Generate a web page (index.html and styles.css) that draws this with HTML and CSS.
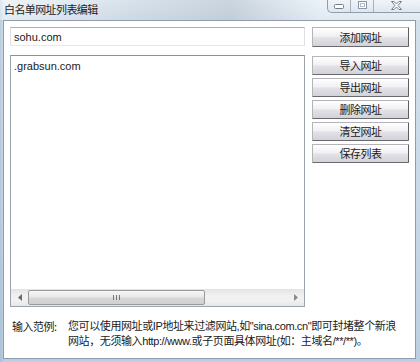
FILE: index.html
```html
<!DOCTYPE html>
<html lang="zh-CN">
<head>
<meta charset="utf-8">
<title>白名单网址列表编辑</title>
<link rel="stylesheet" href="styles.css">
</head>
<body>
<div class="window">
  <div class="titlebar">
    <span class="title">白名单网址列表编辑</span>
    <div class="caption">
      <span class="cap cap-min"><svg width="10" height="5" viewBox="0 0 10 5"><rect x="0.5" y="0.5" width="9" height="4" rx="1" fill="#fff" stroke="#6f7c8a"/></svg></span>
      <span class="cap cap-max"><svg width="9" height="8" viewBox="0 0 9 8"><rect x="0.5" y="0.5" width="8" height="7" fill="#fff" stroke="#8a96a3"/><rect x="2.5" y="2.5" width="4" height="3" fill="none" stroke="#b5bec8"/></svg></span>
      <span class="cap cap-close"><svg width="11" height="9" viewBox="0 0 11 9"><path d="M0.5 0.5 H3 L5.5 3 L8 0.5 H10.5 L7 4.5 L10.5 8.5 H8 L5.5 6 L3 8.5 H0.5 L4 4.5 Z" fill="#fff" stroke="#6f7c8a" stroke-linejoin="round"/></svg></span>
    </div>
  </div>
  <div class="client">
    <div class="main">
      <div class="left">
        <input class="url-input" type="text" value="sohu.com">
        <div class="list">
          <div class="items">
            <div class="item">.grabsun.com</div>
          </div>
          <div class="hscroll">
            <span class="sb-btn"><svg width="4" height="7" viewBox="0 0 4 7"><path d="M4 0 L0 3.5 L4 7 Z" fill="#6a6a6a"/></svg></span>
            <div class="track">
              <div class="thumb"><svg width="8" height="5" viewBox="0 0 8 5"><path d="M0.5 0 V5 M3.5 0 V5 M6.5 0 V5" stroke="#777" stroke-width="1"/></svg></div>
            </div>
            <span class="sb-btn"><svg width="4" height="7" viewBox="0 0 4 7"><path d="M0 0 L4 3.5 L0 7 Z" fill="#8a8a8a"/></svg></span>
          </div>
        </div>
      </div>
      <div class="buttons">
        <button class="btn btn-add">添加网址</button>
        <div class="btn-group">
          <button class="btn">导入网址</button>
          <button class="btn">导出网址</button>
          <button class="btn">删除网址</button>
          <button class="btn">清空网址</button>
          <button class="btn">保存列表</button>
        </div>
      </div>
    </div>
    <div class="note">
      <span class="note-label">输入范例:</span>
      <p class="note-text">您可以使用网址或IP地址来过滤网站,如"sina.com.cn"即可封堵整个新浪网站，无须输入http://www.或子页面具体网址(如：主域名/**/**)。</p>
    </div>
  </div>
</div>
</body>
</html>
```

FILE: styles.css
```css
html, body {
  margin: 0;
  padding: 0;
}

body {
  width: 420px;
  height: 362px;
  overflow: hidden;
  font-family: "Liberation Sans", "Noto Sans CJK SC", sans-serif;
  font-size: 11px;
  color: #1a1a1a;
}

.window {
  width: 420px;
  height: 362px;
  background:
    linear-gradient(90deg, rgba(140,165,190,0.35) 0px, rgba(140,165,190,0) 4px),
    linear-gradient(180deg, #e4edf5 0px, #d3e0ec 20px, #c9d9e8 200px, #bccfe2 362px);
}

.titlebar {
  height: 20px;
  display: flex;
  align-items: flex-start;
  background: linear-gradient(90deg, rgba(255,255,255,0.4) 0, rgba(180,190,200,0.25) 140px, rgba(160,170,180,0.35) 230px, rgba(255,255,255,0.3) 320px);
}

.title {
  padding-left: 4px;
  padding-top: 2px;
  line-height: 14px;
  font-size: 11px;
  letter-spacing: -0.6px;
  font-family: "Noto Sans CJK SC", sans-serif;
  color: #1e1e1e;
}

.caption {
  margin-left: auto;
  margin-top: -2px;
  display: flex;
  height: 14px;
  border: 1px solid #8e9cab;
  border-top: none;
  border-right: none;
  border-radius: 0 0 0 5px;
  background: linear-gradient(180deg, #f4f7fa, #dfe6ee);
}

.cap {
  display: flex;
  align-items: center;
  justify-content: center;
  height: 14px;
}

.cap-min {
  width: 23px;
  border-right: 1px solid #a7b2be;
  padding-top: 3px;
  box-sizing: border-box;
}

.cap-max {
  width: 22px;
  border-right: 1px solid #a7b2be;
}

.cap-close {
  width: 46px;
  box-sizing: border-box;
  justify-content: flex-start;
  padding-left: 17px;
}

.client {
  margin-left: 3px;
  width: 413px;
  height: 339px;
  box-sizing: border-box;
  border: 1px solid #8f9caa;
  background: #ffffff;
}

.main {
  display: flex;
  gap: 7px;
  padding: 6px 0 0 6px;
}

.left {
  width: 295px;
  display: flex;
  flex-direction: column;
  gap: 9px;
}

.url-input {
  box-sizing: border-box;
  width: 295px;
  height: 19px;
  margin: 0;
  padding: 0 0 0 3px;
  border: 1px solid #dbdfe6;
  border-top-color: #abadb3;
  border-bottom-color: #e3e9ef;
  font-family: "Liberation Sans", sans-serif;
  font-size: 11px;
  color: #1a1a1a;
  outline: none;
}

.list {
  box-sizing: border-box;
  height: 252px;
  border: 1px solid #9da3ab;
  border-top-color: #8a9099;
  display: flex;
  flex-direction: column;
}

.items {
  flex: 1;
  padding: 3px 0 0 3px;
}

.item {
  line-height: 14px;
  font-size: 11px;
}

.hscroll {
  height: 17px;
  display: flex;
  background: linear-gradient(180deg, #e3e3e3, #f1f1f1 40%, #f1f1f1 70%, #e6e6e6);
}

.sb-btn {
  width: 17px;
  height: 17px;
  display: flex;
  align-items: center;
  justify-content: center;
}

.track {
  flex: 1;
  padding: 1px 0;
}

.thumb {
  box-sizing: border-box;
  width: 177px;
  height: 15px;
  border: 1px solid #9a9a9a;
  border-radius: 2px;
  background: linear-gradient(180deg, #f6f6f6, #e9e9e9 45%, #d8d8d8 55%, #d0d0d0);
  display: flex;
  align-items: center;
  justify-content: center;
}

.buttons {
  width: 97px;
  display: flex;
  flex-direction: column;
  gap: 9px;
}

.btn-group {
  display: flex;
  flex-direction: column;
  gap: 3px;
}

.btn {
  box-sizing: border-box;
  width: 97px;
  height: 19px;
  margin: 0;
  padding: 0;
  border: 1px solid #b4b4b8;
  border-right-color: #5e5e62;
  border-bottom-color: #6a6a6e;
  border-radius: 1px;
  background: linear-gradient(180deg, #ffffff 0%, #f1f1f4 45%, #e1e1e6 55%, #d2d2d9 100%);
  font-family: "Noto Sans CJK SC", sans-serif;
  font-size: 11px;
  letter-spacing: -0.5px;
  line-height: 17px;
  color: #1a1a1a;
}

.btn-add {
  height: 20px;
}

.note {
  display: flex;
  margin-top: 12px;
  padding-left: 8px;
  line-height: 15px;
}

.note-label {
  width: 56px;
  flex: none;
  font-family: "Noto Sans CJK SC", sans-serif;
  letter-spacing: -0.5px;
}

.note-text {
  margin: 0;
  width: 334px;
  flex: none;
  font-family: "Liberation Sans", "Noto Sans CJK SC", sans-serif;
  letter-spacing: -0.4px;
}
```
